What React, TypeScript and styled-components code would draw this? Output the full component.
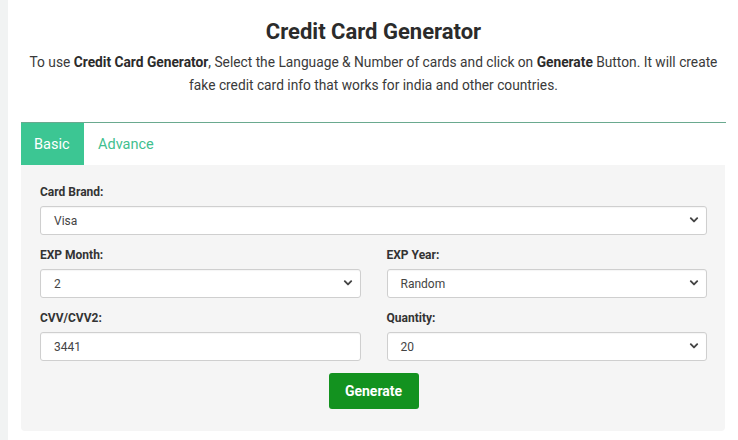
import React from "react";
import styled, { createGlobalStyle } from "styled-components";

const Global = createGlobalStyle`
  html, body { margin: 0; padding: 0; background: #fff; }
  body { font-family: Roboto, "Noto Sans", Arial, sans-serif; color: #333; }
  * { box-sizing: border-box; }
`;

const Page = styled.div`
  display: flex;
  min-height: 440px;
`;

const SideStrip = styled.div`
  width: 8px;
  flex: none;
  background: #f1f3f3;
`;

const Main = styled.main`
  flex: 1;
  padding: 18px 12px 0 13px;
`;

const Title = styled.h1`
  margin: 0;
  text-align: center;
  font-size: 22px;
  font-weight: 700;
  line-height: 28px;
  color: #2b2b2b;
`;

const Intro = styled.p`
  margin: 5px 0 0;
  text-align: center;
  font-size: 13.75px;
  line-height: 23px;
  color: #3a3a3a;
  strong { font-weight: 700; color: #2b2b2b; }
`;

const Tabs = styled.div`
  margin-top: 25px;
  border-top: 1px solid #6aa98f;
  display: flex;
  align-items: stretch;
  height: 43px;
`;

const Tab = styled.div<{ $active?: boolean }>`
  display: flex;
  align-items: center;
  padding: 0 ${(p) => (p.$active ? "13px" : "14px")};
  font-size: 14.5px;
  color: ${(p) => (p.$active ? "#ffffff" : "#3fc08f")};
  background: ${(p) => (p.$active ? "#3cc693" : "transparent")};
  width: ${(p) => (p.$active ? "63px" : "auto")};
`;

const Panel = styled.div`
  margin-right: 1px;
  background: #f5f5f5;
  border-radius: 0 0 4px 4px;
  padding: 20px 18px 22px 19px;
`;

const Field = styled.div`
  display: flex;
  flex-direction: column;
`;

const Label = styled.label`
  font-size: 12px;
  font-weight: 700;
  line-height: 14px;
  color: #333;
  margin-bottom: 7px;
`;

const Row = styled.div`
  display: grid;
  grid-template-columns: 1fr 1fr;
  column-gap: 26px;
  margin-top: 13px;
`;

const SelectWrap = styled.div`
  position: relative;
  height: 29px;
`;

const Control = styled.div`
  height: 29px;
  border: 1px solid #cfcfcf;
  border-radius: 3px;
  background: #fff;
  font-size: 12px;
  color: #444;
  display: flex;
  align-items: center;
  padding-left: 13px;
  box-shadow: inset 0 1px 1px rgba(0,0,0,0.04);
`;

const InputBox = styled(Control)`
  padding-left: 13px;
`;

const Chevron = styled.svg`
  position: absolute;
  right: 8px;
  top: 10px;
  width: 10px;
  height: 8px;
`;

const ButtonRow = styled.div`
  display: flex;
  justify-content: center;
  margin-top: 12px;
`;

const Button = styled.button`
  width: 90px;
  height: 36px;
  border: none;
  border-radius: 3px;
  background: #13921f;
  color: #fff;
  font-family: Roboto, Arial, sans-serif;
  font-weight: 700;
  font-size: 14px;
  padding: 0;
`;

const Select = ({ value }: { value: string }) => (
  <SelectWrap>
    <Control>{value}</Control>
    <Chevron viewBox="0 0 10 8">
      <path d="M1.8 2.2 L5 5.4 L8.2 2.2" fill="none" stroke="#444" strokeWidth="1.9" strokeLinecap="round" strokeLinejoin="round" />
    </Chevron>
  </SelectWrap>
);

export default function App() {
  return (
    <>
      <Global />
      <Page>
        <SideStrip />
        <Main>
          <Title>Credit Card Generator</Title>
          <Intro>
            To use <strong>Credit Card Generator</strong>, Select the Language &amp; Number of cards and click on <strong>Generate</strong> Button. It will create fake credit card info that works for india and other countries.
          </Intro>
          <Tabs>
            <Tab $active>Basic</Tab>
            <Tab>Advance</Tab>
          </Tabs>
          <Panel>
            <Field>
              <Label>Card Brand:</Label>
              <Select value="Visa" />
            </Field>
            <Row>
              <Field>
                <Label>EXP Month:</Label>
                <Select value="2" />
              </Field>
              <Field>
                <Label>EXP Year:</Label>
                <Select value="Random" />
              </Field>
            </Row>
            <Row>
              <Field>
                <Label>CVV/CVV2:</Label>
                <InputBox>3441</InputBox>
              </Field>
              <Field>
                <Label>Quantity:</Label>
                <Select value="20" />
              </Field>
            </Row>
            <ButtonRow>
              <Button>Generate</Button>
            </ButtonRow>
          </Panel>
        </Main>
      </Page>
    </>
  );
}
